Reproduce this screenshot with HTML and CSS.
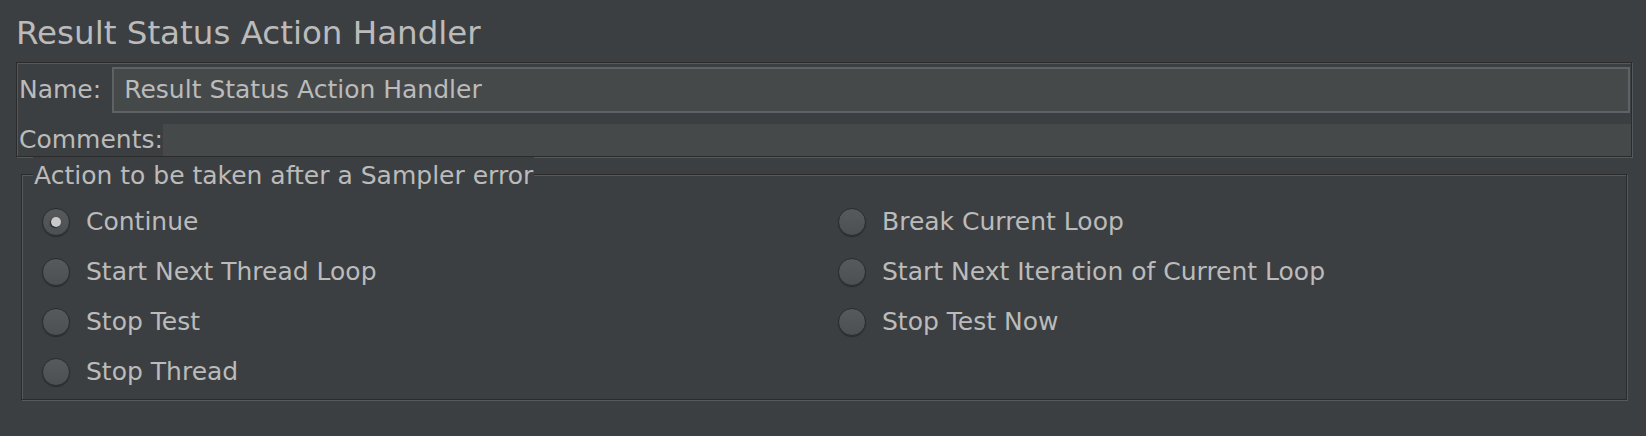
FILE: index.html
```html
<!DOCTYPE html>
<html lang="en">
<head>
<meta charset="utf-8">
<title>Result Status Action Handler</title>
<link rel="stylesheet" href="styles.css">
</head>
<body>
<div class="page">
  <h1 class="title">Result Status Action Handler</h1>
  <div class="name-panel">
    <div class="name-row">
      <label class="lbl" for="name">Name:</label>
      <div class="field" id="name">Result Status Action Handler</div>
    </div>
    <div class="comments-row">
      <label class="lbl">Comments:</label>
      <div class="comments"></div>
    </div>
  </div>
  <fieldset class="group">
    <legend class="legend">Action to be taken after a Sampler error</legend>
    <div class="options">
      <div class="opt"><span class="radio selected"></span><span class="opt-text">Continue</span></div>
      <div class="opt"><span class="radio"></span><span class="opt-text">Break Current Loop</span></div>
      <div class="opt"><span class="radio"></span><span class="opt-text">Start Next Thread Loop</span></div>
      <div class="opt"><span class="radio"></span><span class="opt-text">Start Next Iteration of Current Loop</span></div>
      <div class="opt"><span class="radio"></span><span class="opt-text">Stop Test</span></div>
      <div class="opt"><span class="radio"></span><span class="opt-text">Stop Test Now</span></div>
      <div class="opt"><span class="radio"></span><span class="opt-text">Stop Thread</span></div>
    </div>
  </fieldset>
</div>
</body>
</html>
```

FILE: styles.css
```css
html, body {
  margin: 0;
  padding: 0;
  background: #3c3f41;
}

body {
  width: 1646px;
  height: 436px;
  overflow: hidden;
  font-family: "DejaVu Sans", "Liberation Sans", sans-serif;
  color: #bbbbbb;
}

.page {
  display: flex;
  flex-direction: column;
}

.title {
  margin: 0;
  padding: 13px 0 0 16px;
  font-size: 32.5px;
  font-weight: normal;
  line-height: 40px;
  color: #bbbbbb;
}

.name-panel {
  margin: 9px 14px 0 16px;
  border: 1px solid #2b2b2b;
  box-shadow: inset 1px 1px 0 #56595b, 1px 1px 0 #56595b;
  display: flex;
  flex-direction: column;
  gap: 11px;
  padding: 4px 0 0 2px;
  font-size: 25px;
}

.name-row {
  display: flex;
  align-items: center;
  gap: 11px;
  padding-right: 1px;
}

.lbl {
  line-height: 30px;
  white-space: nowrap;
}

.field {
  flex: 1;
  height: 42px;
  border: 2px solid #5f6264;
  background: #45494a;
  padding: 0 10px;
  line-height: 42px;
  color: #bbbbbb;
}

.comments-row {
  display: flex;
  align-items: center;
  height: 32px;
}

.comments {
  flex: 1;
  align-self: stretch;
  background: #45494a;
}

.group {
  margin: 0 19px 0 21px;
  padding: 6px 0 2px 11px;
  border: 1px solid #2b2b2b;
  box-shadow: inset 1px 1px 0 #56595b, 1px 1px 0 #56595b;
  font-size: 25px;
}

.legend {
  padding: 4px 1px 0 1px;
  line-height: 30px;
  background: #3c3f41;
  color: #bbbbbb;
}

.options {
  display: grid;
  grid-template-columns: 796px 1fr;
  grid-auto-rows: 50px;
  padding-left: 9px;
}

.opt {
  display: flex;
  align-items: center;
  gap: 16px;
  white-space: nowrap;
}

.radio {
  position: relative;
  flex: none;
  width: 26px;
  height: 26px;
  border-radius: 50%;
  border: 1px solid #2a2c2d;
  background: linear-gradient(#575a5c, #4c5052);
  box-shadow: 0 1px 1px rgba(0, 0, 0, 0.35);
}

.radio.selected::after {
  content: "";
  position: absolute;
  left: 8px;
  top: 8px;
  width: 10px;
  height: 10px;
  border-radius: 50%;
  background: #c9c9c9;
  box-shadow: -1px 1px 1px rgba(0, 0, 0, 0.55);
}

.opt-text {
  line-height: 30px;
}
```
